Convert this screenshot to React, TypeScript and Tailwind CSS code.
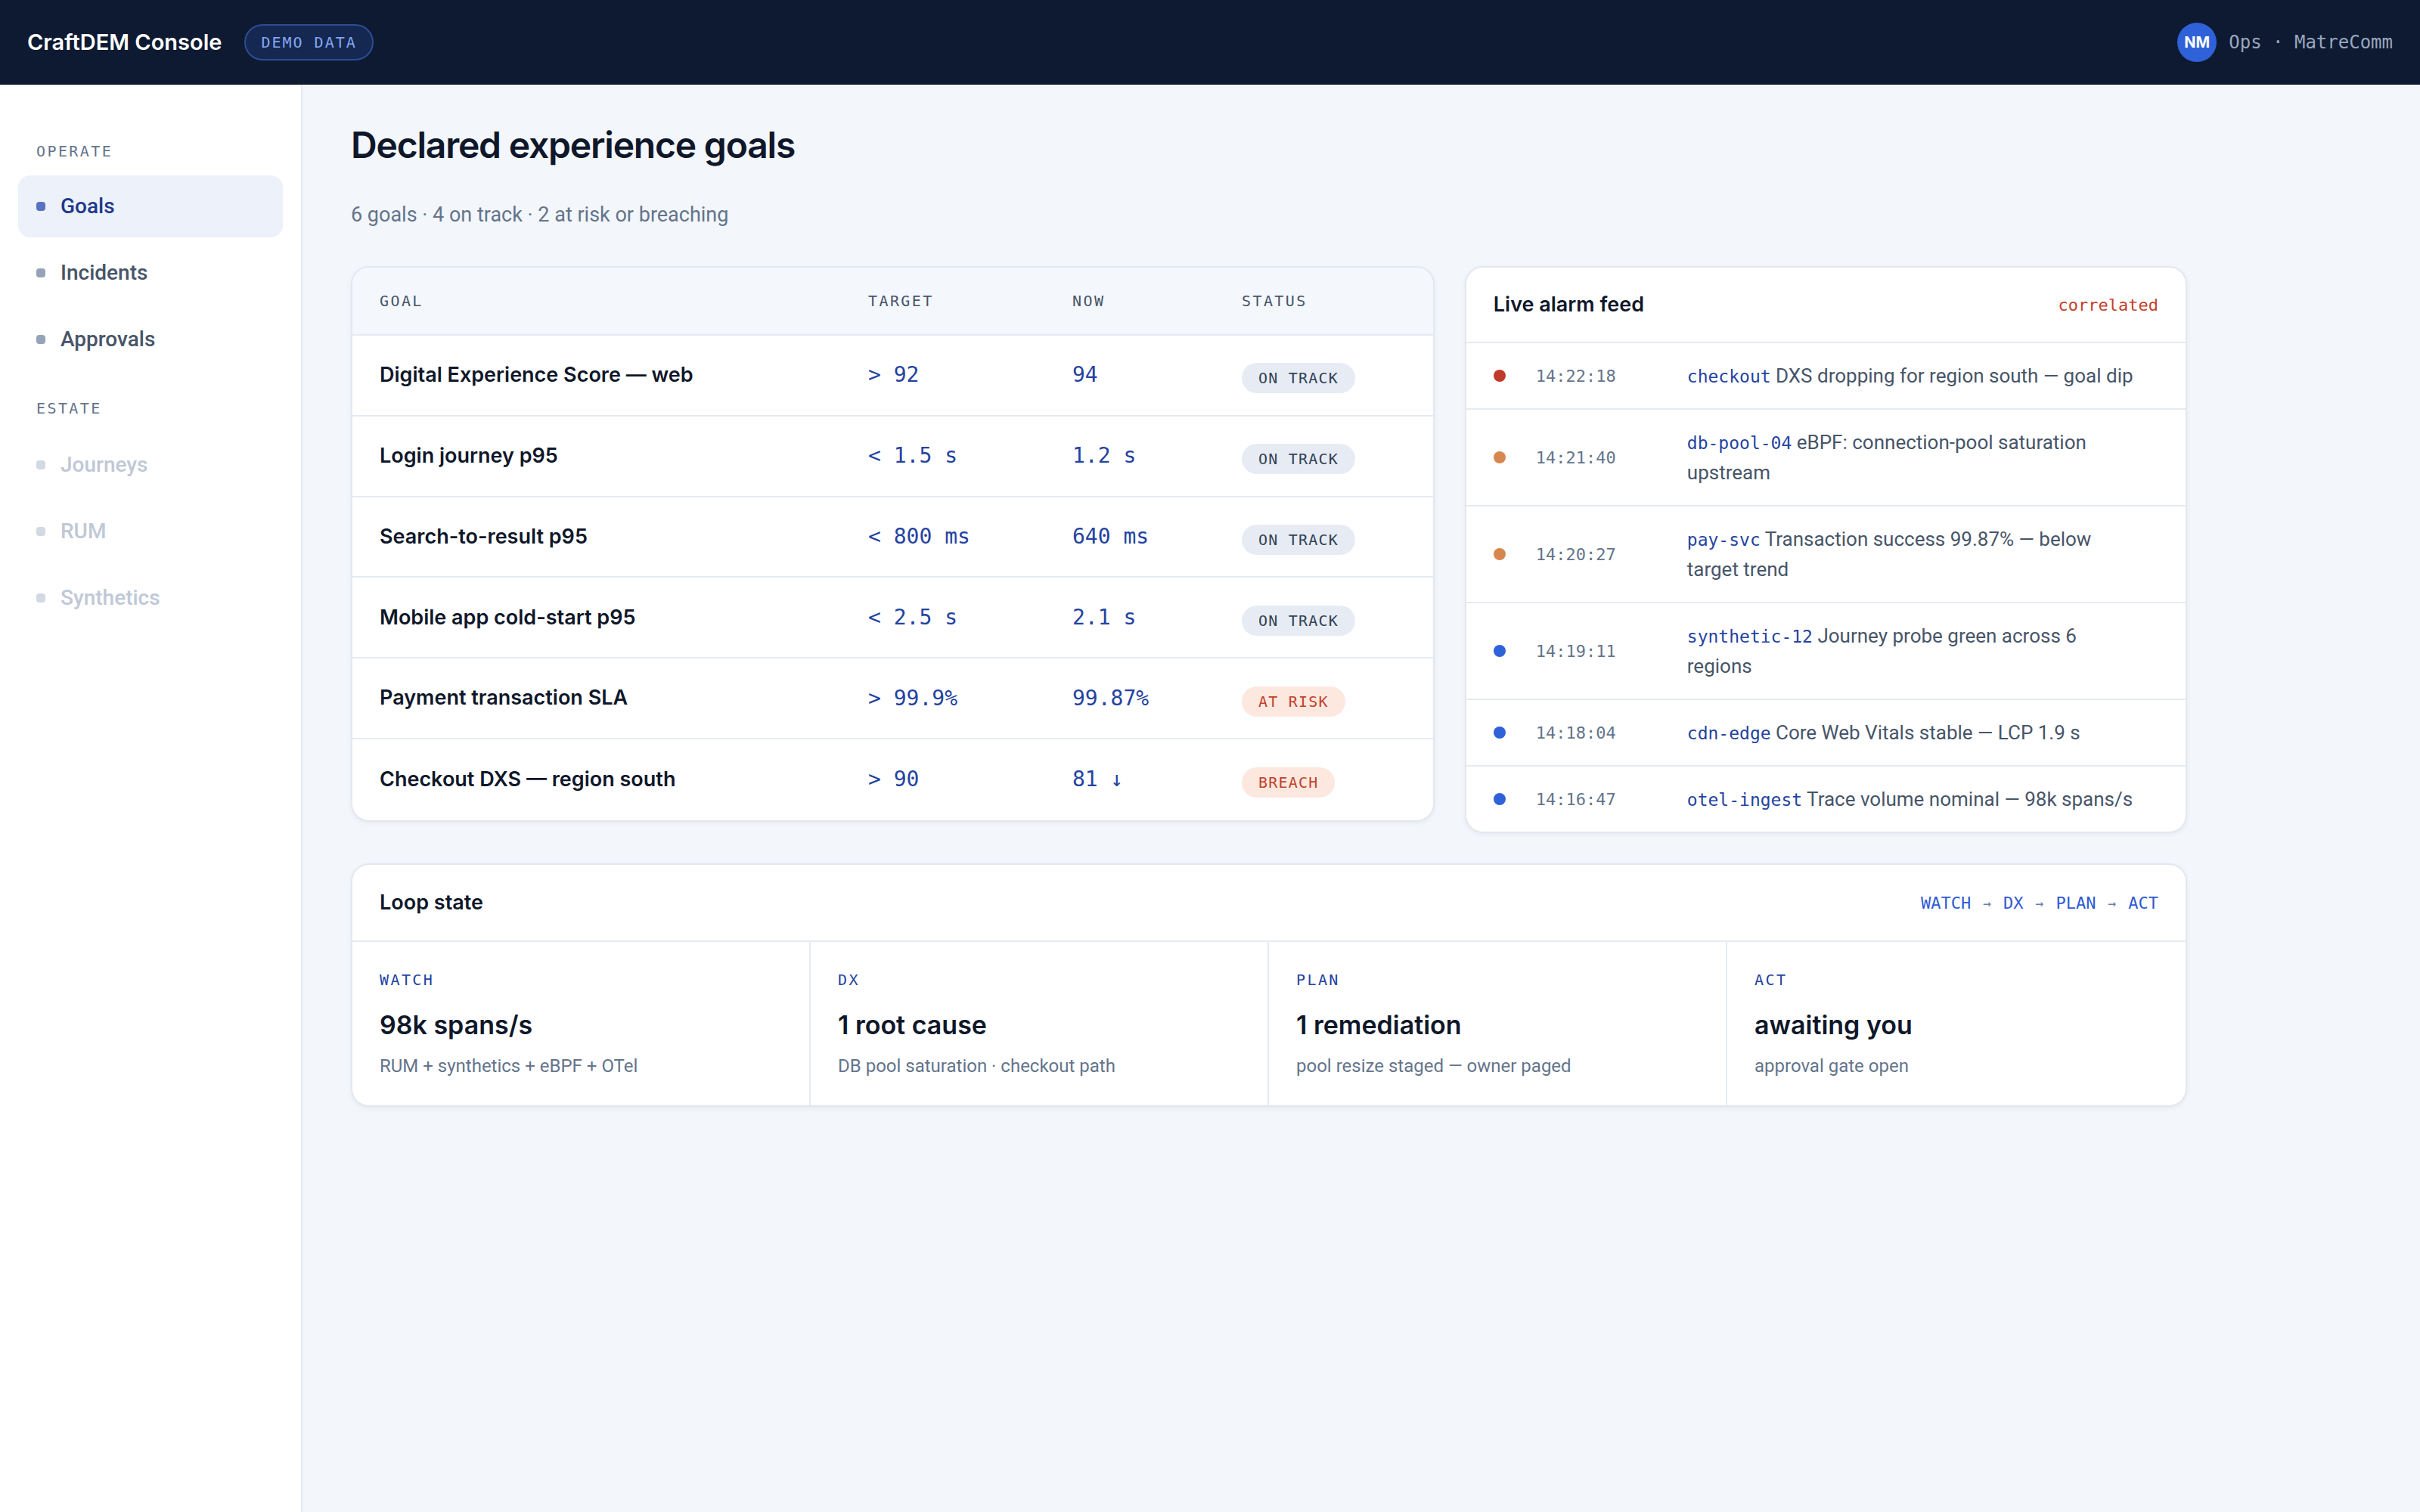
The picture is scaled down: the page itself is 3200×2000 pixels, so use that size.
import type { ReactNode } from "react";

type Status = "ok" | "risk" | "breach";

const goals: { name: string; target: string; now: string; status: Status }[] = [
  { name: "Digital Experience Score — web", target: "> 92", now: "94", status: "ok" },
  { name: "Login journey p95", target: "< 1.5 s", now: "1.2 s", status: "ok" },
  { name: "Search-to-result p95", target: "< 800 ms", now: "640 ms", status: "ok" },
  { name: "Mobile app cold-start p95", target: "< 2.5 s", now: "2.1 s", status: "ok" },
  { name: "Payment transaction SLA", target: "> 99.9%", now: "99.87%", status: "risk" },
  { name: "Checkout DXS — region south", target: "> 90", now: "81 ↓", status: "breach" },
];

const alarms = [
  { level: "crit", time: "14:22:18", tag: "checkout", text: "DXS dropping for region south — goal dip" },
  { level: "warn", time: "14:21:40", tag: "db-pool-04", text: "eBPF: connection-pool saturation upstream" },
  { level: "warn", time: "14:20:27", tag: "pay-svc", text: "Transaction success 99.87% — below target trend" },
  { level: "info", time: "14:19:11", tag: "synthetic-12", text: "Journey probe green across 6 regions" },
  { level: "info", time: "14:18:04", tag: "cdn-edge", text: "Core Web Vitals stable — LCP 1.9 s" },
  { level: "info", time: "14:16:47", tag: "otel-ingest", text: "Trace volume nominal — 98k spans/s" },
];

const loop = [
  { stage: "WATCH", value: "98k spans/s", note: "RUM + synthetics + eBPF + OTel" },
  { stage: "DX", value: "1 root cause", note: "DB pool saturation · checkout path" },
  { stage: "PLAN", value: "1 remediation", note: "pool resize staged — owner paged" },
  { stage: "ACT", value: "awaiting you", note: "approval gate open" },
];

const mono = "font-['DejaVu_Sans_Mono','Liberation_Mono',monospace]";
const head = "font-['Inter','Noto_Sans',sans-serif]";

const dotColor: Record<string, string> = {
  crit: "bg-[#c0392b]",
  warn: "bg-[#d6874f]",
  info: "bg-[#2f62d8]",
};

function StatusPill({ status }: { status: Status }) {
  if (status === "ok") {
    return (
      <span className={`${mono} inline-flex h-5 items-center rounded-full bg-[#e7ecf4] px-[11px] text-[10px] tracking-[0.06em] text-[#334155]`}>
        ON TRACK
      </span>
    );
  }
  return (
    <span className={`${mono} inline-flex h-5 items-center rounded-full bg-[#fce8df] px-[11px] text-[10px] tracking-[0.06em] text-[#c2412a]`}>
      {status === "risk" ? "AT RISK" : "BREACH"}
    </span>
  );
}

function NavItem({ label, active, muted }: { label: string; active?: boolean; muted?: boolean }) {
  let cls = "text-[#475569]";
  let dot = "bg-[#94a3b8]";
  if (active) {
    cls = "bg-[#edf1fa] text-[#1e3a8a]";
    dot = "bg-[#5b72c4]";
  } else if (muted) {
    cls = "text-[#c0c8d6]";
    dot = "bg-[#d3d9e3]";
  }
  return (
    <div className={`flex h-[41px] items-center gap-2.5 rounded-lg px-3 text-[14px] font-medium ${cls}`}>
      <span className={`size-1.5 rounded-[2px] ${dot}`} />
      {label}
    </div>
  );
}

function SectionLabel({ children }: { children: ReactNode }) {
  return <div className={`${mono} px-3 text-[10px] leading-4 tracking-[0.12em] text-[#64748b]`}>{children}</div>;
}

function Card({ children, className = "" }: { children: ReactNode; className?: string }) {
  return (
    <div className={`overflow-hidden rounded-xl border border-[#e3e8f0] bg-white shadow-[0_1px_3px_rgba(15,23,42,0.06)] ${className}`}>
      {children}
    </div>
  );
}

export default function App() {
  return (
    <div className="min-h-screen bg-[#f3f6fb]">
      <div className="[zoom:2] flex h-[1000px] w-[1600px] flex-col font-['Roboto','Noto_Sans',sans-serif] text-[#0f172a]">
        {/* top bar */}
        <header className="flex h-14 shrink-0 items-center justify-between bg-[#0e1a32] px-[18px]">
          <div className="flex items-center gap-[15px]">
            <span className={`${head} text-[14.5px] font-semibold text-white`}>CraftDEM Console</span>
            <span className={`${mono} inline-flex h-6 items-center rounded-full border border-[#2d4c92] bg-[#142851] px-[10px] text-[10px] tracking-[0.1em] text-[#86a7f2]`}>
              DEMO DATA
            </span>
          </div>
          <div className="flex items-center gap-2">
            <span className={`${head} flex size-[26px] items-center justify-center rounded-full bg-[#2f62d8] text-[10px] font-bold text-white`}>
              NM
            </span>
            <span className={`${mono} text-[12px] text-[#9aa7bd]`}>Ops · MatreComm</span>
          </div>
        </header>

        <div className="flex min-h-0 flex-1">
          {/* sidebar */}
          <aside className="w-[200px] shrink-0 border-r border-[#e3e8f0] bg-white px-3 pt-9">
            <SectionLabel>OPERATE</SectionLabel>
            <nav className="mt-2 flex flex-col gap-[3px]">
              <NavItem label="Goals" active />
              <NavItem label="Incidents" />
              <NavItem label="Approvals" />
            </nav>
            <div className="mt-[17px]">
              <SectionLabel>ESTATE</SectionLabel>
            </div>
            <nav className="mt-[9px] flex flex-col gap-[3px]">
              <NavItem label="Journeys" muted />
              <NavItem label="RUM" muted />
              <NavItem label="Synthetics" muted />
            </nav>
          </aside>

          {/* main */}
          <main className="flex-1 px-8 pt-6">
            <div className="w-[1214px]">
              <h1 className={`${head} text-[24px] font-semibold leading-8 tracking-tight text-[#0f172a]`}>
                Declared experience goals
              </h1>
              <p className="mt-5 text-[13.5px] leading-5 text-[#64748b]">
                6 goals · 4 on track · 2 at risk or breaching
              </p>

              <div className="mt-6 grid grid-cols-[1.5fr_1fr] items-start gap-5">
                {/* goals table */}
                <Card>
                  <div className={`${mono} grid h-[45px] grid-cols-[323px_135px_112px_1fr] items-center border-b border-[#e5eaf2] bg-[#f4f7fc] px-[18px] text-[10px] tracking-[0.12em] text-[#475569]`}>
                    <span>GOAL</span>
                    <span>TARGET</span>
                    <span>NOW</span>
                    <span>STATUS</span>
                  </div>
                  <div className="divide-y divide-[#e5eaf2]">
                    {goals.map((g) => (
                      <div key={g.name} className="grid h-[53.4px] grid-cols-[323px_135px_112px_1fr] items-center px-[18px]">
                        <span className={`${head} text-[13.5px] font-semibold text-[#0f172a]`}>{g.name}</span>
                        <span className={`${mono} text-[14px] text-[#2443a0]`}>{g.target}</span>
                        <span className={`${mono} text-[14px] text-[#2443a0]`}>{g.now}</span>
                        <span>
                          <StatusPill status={g.status} />
                        </span>
                      </div>
                    ))}
                  </div>
                </Card>

                {/* alarm feed */}
                <Card>
                  <div className="flex h-[50px] items-center justify-between border-b border-[#e5eaf2] px-[18px]">
                    <span className={`${head} text-[13.5px] font-semibold`}>Live alarm feed</span>
                    <span className={`${mono} text-[11px] text-[#c2412a]`}>correlated</span>
                  </div>
                  <div className="divide-y divide-[#e5eaf2]">
                    {alarms.map((a) => (
                      <div key={a.time} className="grid grid-cols-[28px_100px_1fr] items-center py-[11.5px] pl-[18px] pr-[30px]">
                        <span className={`size-2 rounded-full ${dotColor[a.level]}`} />
                        <span className={`${mono} text-[11px] text-[#64748b]`}>{a.time}</span>
                        <p className="text-[13px] leading-5 text-[#475569]">
                          <span className={`${mono} text-[11.5px] leading-none text-[#2443a0]`}>{a.tag}</span> {a.text}
                        </p>
                      </div>
                    ))}
                  </div>
                </Card>
              </div>

              {/* loop state */}
              <Card className="mt-5">
                <div className="flex h-[51px] items-center justify-between border-b border-[#e5eaf2] px-[18px]">
                  <span className={`${head} text-[13.5px] font-semibold`}>Loop state</span>
                  <div className={`${mono} flex items-center gap-2 text-[11px] text-[#2f5bd3]`}>
                    <span>WATCH</span>
                    <span className="text-[9px] text-[#6b7fa8]">→</span>
                    <span>DX</span>
                    <span className="text-[9px] text-[#6b7fa8]">→</span>
                    <span>PLAN</span>
                    <span className="text-[9px] text-[#6b7fa8]">→</span>
                    <span>ACT</span>
                  </div>
                </div>
                <div className="grid grid-cols-4 divide-x divide-[#e5eaf2]">
                  {loop.map((s) => (
                    <div key={s.stage} className="px-[18px] pb-[17px] pt-[18px]">
                      <div className={`${mono} text-[10px] leading-[14px] tracking-[0.12em] text-[#2443a0]`}>{s.stage}</div>
                      <div className={`${head} mt-[11px] text-[17px] font-semibold leading-6 text-[#0f172a]`}>{s.value}</div>
                      <div className="mt-1.5 text-[12px] leading-[18px] text-[#64748b]">{s.note}</div>
                    </div>
                  ))}
                </div>
              </Card>
            </div>
          </main>
        </div>
      </div>
    </div>
  );
}
